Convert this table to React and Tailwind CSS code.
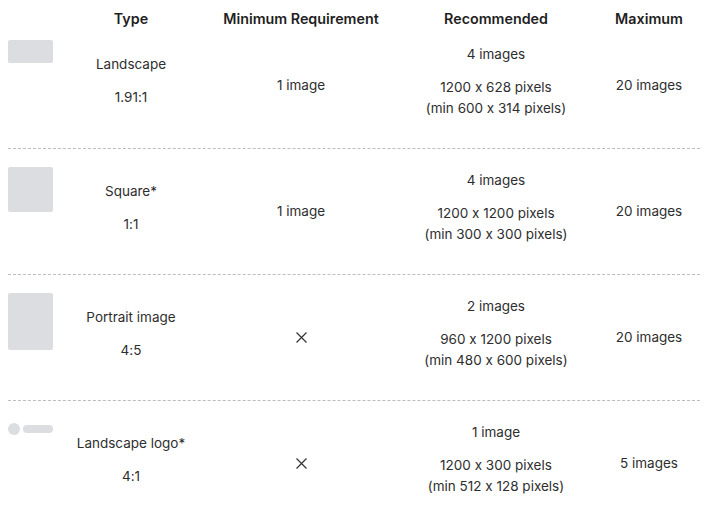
import React from 'react';

const font = { fontFamily: 'Inter, "Noto Sans", sans-serif' };

const CrossIcon = () => (
  <svg width="11" height="11" viewBox="0 0 11 11" className="mx-auto mt-2">
    <path d="M0.5 0.5 L10.5 10.5 M10.5 0.5 L0.5 10.5" stroke="#333" strokeWidth="1.2" fill="none" />
  </svg>
);

const Thumb = ({ kind }) => {
  if (kind === 'logo') {
    return (
      <div className="flex items-center gap-[3px] pt-[4px]">
        <div className="w-3 h-3 rounded-full bg-[#dcdde0]" />
        <div className="w-[30px] h-2 rounded-sm bg-[#dcdde0]" />
      </div>
    );
  }
  const sizes = {
    landscape: 'w-[45px] h-[23px]',
    square: 'w-[45px] h-[45px]',
    portrait: 'w-[45px] h-[57px]',
  };
  return <div className={`${sizes[kind]} rounded-[2px] bg-[#dcdde0]`} />;
};

const rows = [
  { thumb: 'landscape', name: 'Landscape', ratio: '1.91:1', min: '1 image', count: '4 images', size: '1200 x 628 pixels', minSize: '(min 600 x 314 pixels)', max: '20 images' },
  { thumb: 'square', name: 'Square*', ratio: '1:1', min: '1 image', count: '4 images', size: '1200 x 1200 pixels', minSize: '(min 300 x 300 pixels)', max: '20 images' },
  { thumb: 'portrait', name: 'Portrait image', ratio: '4:5', min: null, count: '2 images', size: '960 x 1200 pixels', minSize: '(min 480 x 600 pixels)', max: '20 images' },
  { thumb: 'logo', name: 'Landscape logo*', ratio: '4:1', min: null, count: '1 image', size: '1200 x 300 pixels', minSize: '(min 512 x 128 pixels)', max: '5 images' },
];

const cols = 'grid grid-cols-[60px_126px_214px_176px_116px]';

const Row = ({ row, first }) => (
  <div className={`${cols} h-[126px] pb-2 items-center text-[13.5px] leading-[21px] text-[#2e2e2e] ${first ? '' : 'border-t border-dashed border-[#bdbdbd]'}`}>
    <div className="self-start pt-[18px]">
      <Thumb kind={row.thumb} />
    </div>
    <div className="flex flex-col gap-3 text-center">
      <div>{row.name}</div>
      <div>{row.ratio}</div>
    </div>
    <div className="text-center">
      {row.min ? <div className="mt-2">{row.min}</div> : <CrossIcon />}
    </div>
    <div className="flex flex-col gap-3 text-center">
      <div>{row.count}</div>
      <div>
        <div>{row.size}</div>
        <div>{row.minSize}</div>
      </div>
    </div>
    <div className="text-center pl-[14px]">
      <div className="mt-2">{row.max}</div>
    </div>
  </div>
);

export default function App() {
  return (
    <div className="w-[708px] h-[508px] bg-white overflow-hidden [font-feature-settings:'calt'_0]" style={font}>
      <div className="w-[692px] ml-2">
        <div className={`${cols} h-[37px] items-center text-[14.3px] font-semibold text-[#1f1f1f] text-center`}>
          <div />
          <div>Type</div>
          <div>Minimum Requirement</div>
          <div>Recommended</div>
          <div className="pl-[14px]">Maximum</div>
        </div>
        <div className="-mt-[15px]">
          {rows.map((row, i) => (
            <Row key={i} row={row} first={i === 0} />
          ))}
        </div>
      </div>
    </div>
  );
}
